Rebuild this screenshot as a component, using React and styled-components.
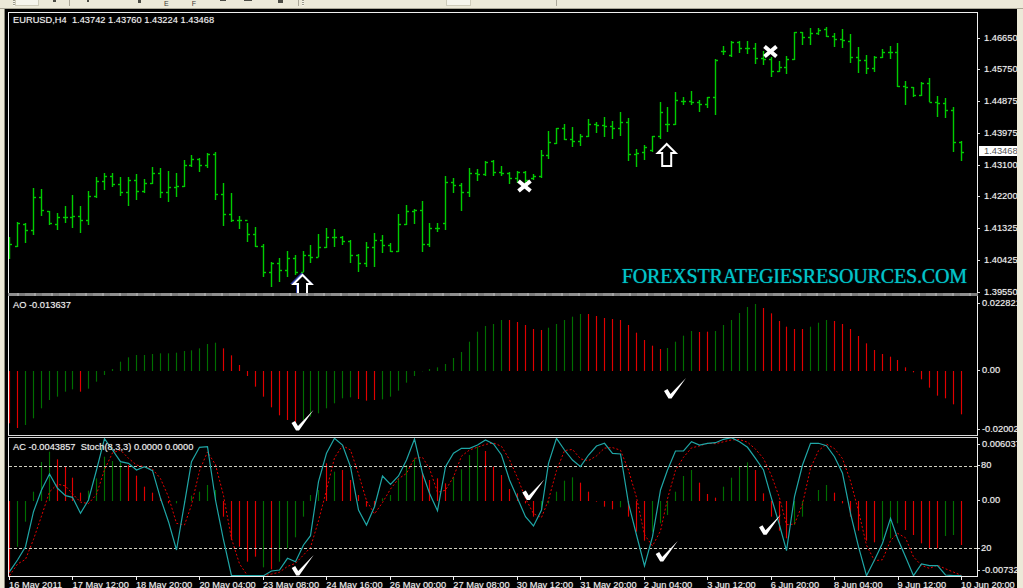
import React from 'react';
import styled, {createGlobalStyle} from 'styled-components';

// Data, read off the chart. y values are page px * 3, bars are [high, low, open, close]
const bars = [
    [712,776,733,733],[667,742,737,670],[670,730,672,690],[565,705,690,592],[568,647,592,631],[632,675,632,670],[640,690,672,650],
    [618,668,650,652],[586,684,652,648],[618,698,648,661],[574,675,661,588],[530,595,588,542],[518,570,542,528],[520,562,528,553],
    [532,588,553,575],[530,618,575,540],[523,600,540,573],[538,580,573,550],[500,553,550,518],[503,594,518,575],[512,606,575,562],
    [518,590,562,558],[480,560,558,495],[465,502,495,478],[475,515,478,495],[460,505,495,462],[456,600,462,583],[548,678,583,643],
    [578,665,643,660],[648,687,660,660],[670,725,660,702],[682,742,702,738],[733,832,738,817],[787,862,817,790],[775,845,790,810],
    [753,832,810,775],[765,825,775,815],[753,815,815,765],[735,788,765,770],[702,770,770,740],[685,745,740,712],[688,740,712,712],
    [708,735,712,723],[720,790,723,765],[762,815,765,789],[727,802,789,740],[700,800,740,720],[705,758,720,735],[730,755,735,752],
    [642,755,752,672],[616,674,672,634],[628,672,634,630],[604,755,630,733],[670,740,733,683],[668,696,683,683],[527,690,670,545],
    [533,580,545,555],[548,633,555,575],[503,590,575,520],[508,544,520,522],[484,528,522,487],[480,528,482,515],[497,528,515,518],
    [515,552,518,533],[514,548,533,516],[514,548,516,540],[522,540,535,527],[450,533,527,466],[393,478,466,425],[385,432,428,385],
    [373,420,385,418],[380,440,418,423],[403,438,423,408],[357,412,408,372],[365,398,372,375],[350,410,375,377],[363,416,377,385],
    [337,407,385,367],[355,482,367,462],[447,500,462,460],[435,480,456,440],[407,455,450,408],[307,418,408,337],[320,395,372,373],
    [277,375,373,300],[290,315,303,303],[272,315,303,305],[300,335,305,312],[290,325,312,292],[178,345,292,180],[137,165,152,152],
    [122,170,165,125],[124,160,125,143],[122,162,143,143],[128,192,143,175],[153,196,175,178],[172,232,178,212],[182,215,212,200],
    [168,222,200,178],[95,180,178,97],[95,134,97,112],[85,134,112,100],[83,104,98,90],[82,112,88,108],[100,140,108,118],[87,143,118,120],
    [102,190,122,170],[140,220,170,180],[165,222,180,205],[167,215,205,172],[148,175,170,155],[137,178,155,155],[128,262,155,258],
    [243,315,258,262],[262,290,262,285],[245,288,285,250],[235,307,250,305],[287,350,305,310],[295,353,310,330],[322,455,330,427],
    [424,482,427,457],
];
const aoValues = [
    400,414,405,385,355,330,320,305,298,305,296,275,255,237,215,202,195,195,192,190,190,188,183,181,175,162,158,175,196,225,258,290,
    320,352,376,390,400,390,380,370,355,340,325,322,327,332,330,328,320,302,278,258,244,237,232,222,204,186,155,125,108,102,90,90,96,
    105,117,120,113,102,90,80,72,72,78,84,87,90,105,128,150,167,177,174,155,137,123,126,125,123,105,90,69,51,42,54,70,93,110,117,117,
    110,98,90,93,102,117,138,160,180,192,200,210,232,247,268,293,317,325,343,373,
];
const aoColors = [['r',2],['g',7],['r',1],['g',17],['r',10],['g',7],['r',3],['g',16],['r',5],['g',5],['r',10],['g',4],['r',2],['g',6],['r',6],['g',3],['r',17]];
const acValues = [
    850,770,695,605,516,485,508,528,563,608,602,565,500,513,518,525,557,590,608,625,640,640,640,617,605,585,600,680,750,770,815,800,
    832,838,815,775,742,680,615,600,520,545,540,570,615,650,650,625,615,565,525,505,550,570,565,580,560,538,495,470,483,530,555,597,
    610,640,680,660,640,605,572,562,578,605,635,650,658,652,680,725,752,725,700,675,605,558,540,578,612,623,590,563,530,517,540,610,
    680,722,745,705,680,632,600,585,608,640,680,722,752,757,750,745,700,720,735,760,775,775,738,735,765,
];
const acColors = [['r',1],['g',5],['r',4],['g',5],['r',6],['g',6],['r',5],['g',1],['r',1],['g',6],['r',1],['g',1],['r',5],['g',5],['r',4],['g',4],['r',7],['g',5],['r',5],['g',1],['r',3],['g',6],['r',3],['g',4],['r',5],['g',5],['r',6],['g',3],['r',5],['g',2],['r',1]];
const stoch = [
    845,810,770,665,600,552,595,617,622,670,630,540,446,480,515,520,540,530,542,625,695,780,640,515,472,470,630,750,857,857,857,857,
    857,843,840,805,815,765,737,575,490,445,465,530,660,705,650,558,583,558,510,447,550,610,662,530,490,475,475,465,450,462,495,570,
    625,680,708,660,520,445,480,510,530,495,468,460,490,492,640,735,828,740,600,540,483,483,455,465,460,458,448,443,455,472,505,540,
    625,705,782,620,525,460,460,467,500,550,670,770,857,810,760,685,745,800,857,822,827,827,855,857,857,
];
const priceLabels = ['1.46650','1.45750','1.44875','1.43975','1.43100','1.42200','1.41325','1.40425','1.39550'];
const dates = ['16 May 2011','17 May 12:00','18 May 20:00','20 May 04:00','23 May 08:00','24 May 16:00','26 May 00:00','27 May 08:00','30 May 12:00','31 May 20:00','2 Jun 04:00','3 Jun 12:00','6 Jun 20:00','8 Jun 04:00','9 Jun 12:00','10 Jun 20:00'];

const barX = (i) => Math.round(9 + i * 7.933) + 0.5;
const lowerY = (z) => 290 + z / 3;
const expand = (runs) => runs.flatMap(([c, n]) => new Array(n).fill(c));
const signal = stoch.map((v, i) => {
    if (i < 2) return v + 12;
    return (stoch[i] + stoch[i - 1] + stoch[i - 2]) / 3;
});
const toPoints = (values) => values.map((z, i) => `${barX(i)},${lowerY(z).toFixed(1)}`).join(' ');

// Styled
const GlobalStyle = createGlobalStyle`
    html, body {
        margin: 0;
        background: #ece9d8;
        overflow: hidden;
    }
`;
const Page = styled.div`
    width: 1023px;
    height: 588px;
    display: flex;
    flex-direction: column;
    overflow: hidden;
    background: #ece9d8;
    font-family: "Liberation Sans", Arial, sans-serif;
    font-size: 9.3px;
    color: #f2f2f2;
    text-shadow: 0 0 1px rgba(255, 255, 255, .45);
`;
const Toolbar = styled.div`
    height: 8px;
    display: flex;
    align-items: flex-start;
    border-bottom: 1px solid #a9a696;
    background: #ece9d8;
    overflow: hidden;
    flex: none;
    text-shadow: none;
`;
const Grip = styled.span`
    width: 2px;
    height: 6px;
    margin-left: ${props => props.$ml}px;
    background: repeating-linear-gradient(#9c9a8a 0 1px, #f7f6ee 1px 2px);
    flex: none;
`;
const Separator = styled.span`
    width: 1px;
    height: 6px;
    margin-left: ${props => props.$ml}px;
    background: #aca899;
    flex: none;
`;
const ActiveButton = styled.span`
    width: ${props => props.$w}px;
    height: 6px;
    margin-left: ${props => props.$ml}px;
    box-sizing: border-box;
    background: #f6f5ec;
    border: 1px solid #cfccba;
    border-top: 0;
    flex: none;
`;
const Glyph = styled.span`
    width: ${props => props.$w}px;
    height: ${props => props.$h}px;
    margin-left: ${props => props.$ml}px;
    background: #4c4c44;
    flex: none;
`;
const ToolLetter = styled.span`
    margin-left: ${props => props.$ml}px;
    font-size: 7px;
    line-height: 7px;
    color: #3c3c34;
    flex: none;
`;
const Workspace = styled.div`
    flex: 1;
    display: flex;
    padding: 0 6px 0 4px;
    min-height: 0;
`;
const Terminal = styled.div`
    width: 1013px;
    box-sizing: border-box;
    background: #000;
    border-left: 1px solid #8c8a7c;
    padding: 3px 0 0 3px;
    display: flex;
    flex-direction: column;
    overflow: hidden;
`;
const Pane = styled.div`
    display: flex;
    height: ${props => props.$h}px;
    flex: none;
`;
const Plot = styled.div`
    position: relative;
    width: 970px;
    box-sizing: border-box;
    border-left: 1px solid #f0f0f0;
    border-right: 1px solid #f0f0f0;
    border-top: ${props => props.$top ? '1px solid #f0f0f0' : '0'};
    overflow: hidden;
    flex: none;
`;
const ChartSvg = styled.svg`
    display: block;
    width: 968px;
    height: 100%;
`;
const Legend = styled.div`
    position: absolute;
    left: 4px;
    top: ${props => props.$top}px;
    line-height: 10px;
    white-space: pre;
`;
const Watermark = styled.div`
    position: absolute;
    right: 10px;
    bottom: 6px;
    font-family: "Liberation Serif", "Times New Roman", serif;
    font-size: 20px;
    line-height: 22px;
    letter-spacing: -0.15px;
    color: #00c4c8;
    text-shadow: 0 0 1px #00a8ae;
    white-space: nowrap;
`;
const Axis = styled.div`
    position: relative;
    width: 39px;
    padding-top: ${props => props.$pad || 0}px;
    box-sizing: border-box;
    display: flex;
    flex-direction: column;
    overflow: ${props => props.$clip ? 'hidden' : 'visible'};
    flex: none;
`;
const AxisLabel = styled.div`
    position: relative;
    height: 10px;
    line-height: 10px;
    margin-top: ${props => props.$mt}px;
    padding-left: ${props => props.$pl}px;
    white-space: nowrap;
    flex: none;
    &::before {
        content: "";
        position: absolute;
        left: 0;
        top: 5px;
        width: 2px;
        height: 1px;
        background: #e0e0e0;
    }
`;
const PriceTag = styled.div`
    position: absolute;
    left: 1px;
    top: 134px;
    width: 38px;
    height: 10px;
    line-height: 10px;
    padding-left: 5px;
    box-sizing: border-box;
    background: #fff;
    color: #555;
    text-shadow: none;
`;
const MainSplitter = styled.div`
    width: 970px;
    height: 3px;
    background: repeating-linear-gradient(90deg, #8e8e8e 0 9px, #a4a4a4 9px 11px, #7c7c7c 11px 17px);
    flex: none;
`;
const SubSplitter = styled.div`
    width: 970px;
    height: 3px;
    box-sizing: border-box;
    border-top: 1px solid #d8d8d8;
    border-bottom: 1px solid #d8d8d8;
    flex: none;
`;
const DateAxis = styled.div`
    width: 970px;
    height: 12px;
    box-sizing: border-box;
    border-top: 1px solid #f0f0f0;
    padding-left: 1px;
    display: flex;
    flex: none;
`;
const DateCell = styled.div`
    position: relative;
    width: 63.47px;
    line-height: 10px;
    padding-top: 3px;
    white-space: nowrap;
    flex: none;
    &::before {
        content: "";
        position: absolute;
        left: 0;
        top: 0;
        width: 1px;
        height: 3px;
        background: #f0f0f0;
    }
`;

// Drawn marks
const Arrow = ({c, t, fringe}) => {
    const d = `M${c},${t} L${c + 9},${t + 9} L${c + 4.5},${t + 9} L${c + 4.5},${t + 22} L${c - 4.5},${t + 22} L${c - 4.5},${t + 9} L${c - 9},${t + 9} Z`;
    return (
        <g>
            {fringe && <path d={d} fill="none" stroke="#2a3aa8" strokeWidth="2" transform="translate(-1,-1)"/>}
            <path d={d} fill="#000" stroke="#fff" strokeWidth="2"/>
        </g>
    );
};
const Cross = ({x, y}) => (
    <g stroke="#fff" strokeWidth="4">
        <line x1={x - 6} y1={y - 5} x2={x + 6} y2={y + 5}/>
        <line x1={x - 6} y1={y + 5} x2={x + 6} y2={y - 5}/>
    </g>
);
const Check = ({x, y}) => (
    <path
        d={`M${x - 6},${y - 7} L${x - 2.5},${y - 9} L${x + 0.5},${y - 4} L${x + 16},${y - 20} L${x + 1.5},${y + 0.5} L${x - 1.5},${y + 0.5} Z`}
        fill="#fff"
    />
);

const PriceBars = () => (
    <g stroke="#00cc00" strokeWidth="1.4">
        {bars.map(([high, low, open, close], i) => {
            const x = barX(i);
            const o = Math.round(open / 3) + 0.5;
            const c = Math.round(close / 3) + 0.5;
            return (
                <g key={i}>
                    <line x1={x} y1={Math.round(high / 3)} x2={x} y2={Math.round(low / 3)}/>
                    <line x1={x - 2.5} y1={o} x2={x} y2={o}/>
                    <line x1={x} y1={c} x2={x + 2.5} y2={c}/>
                </g>
            );
        })}
    </g>
);
const Histogram = ({values, colors, zero}) => {
    const scheme = expand(colors);
    return (
        <g strokeWidth="1.15">
            {values.map((z, i) => (
                <line
                    key={i}
                    x1={barX(i)} x2={barX(i)}
                    y1={lowerY(zero)} y2={lowerY(z)}
                    stroke={scheme[i] === 'r' ? '#e00000' : '#006e00'}
                />
            ))}
        </g>
    );
};

const App = () => (
    <Page>
        <GlobalStyle/>
        <Toolbar>
            <Grip $ml={13}/>
            <ActiveButton $w={24} $ml={0}/>
            <Glyph $w={3} $h={2} $ml={14}/>
            <Separator $ml={13}/>
            <Glyph $w={2} $h={2} $ml={17}/>
            <Glyph $w={3} $h={3} $ml={49}/>
            <ToolLetter $ml={23}>E</ToolLetter>
            <ToolLetter $ml={23}>F</ToolLetter>
            <Glyph $w={6} $h={1} $ml={24}/>
            <Glyph $w={8} $h={1} $ml={18}/>
            <Glyph $w={5} $h={3} $ml={26}/>
            <Separator $ml={15}/>
            <Grip $ml={3}/>
            <ActiveButton $w={25} $ml={142}/>
            <Separator $ml={85}/>
        </Toolbar>
        <Workspace>
            <Terminal>
                <Pane $h={281}>
                    <Plot $top>
                        <ChartSvg viewBox="9 13 968 280" preserveAspectRatio="none">
                            <PriceBars/>
                            <Arrow c={302.5} t={275} fringe/>
                            <Arrow c={666.7} t={144}/>
                            <Cross x={524.5} y={186}/>
                            <Cross x={770.5} y={51.5}/>
                        </ChartSvg>
                        <Legend $top={2}>EURUSD,H4  1.43742 1.43760 1.43224 1.43468</Legend>
                        <Watermark>FOREXSTRATEGIESRESOURCES.COM</Watermark>
                    </Plot>
                    <Axis $pad={20.7}>
                        {priceLabels.map((label, i) => <AxisLabel key={label} $mt={i ? 21.75 : 0} $pl={6}>{label}</AxisLabel>)}
                        <PriceTag>1.43468</PriceTag>
                    </Axis>
                </Pane>
                <MainSplitter/>
                <Pane $h={139}>
                    <Plot>
                        <ChartSvg viewBox="9 296 968 139" preserveAspectRatio="none">
                            <Histogram values={aoValues} colors={aoColors} zero={243}/>
                            <Check x={297.5} y={430}/>
                            <Check x={670} y={398}/>
                        </ChartSvg>
                        <Legend $top={4}>AO -0.013637</Legend>
                    </Plot>
                    <Axis $clip>
                        <AxisLabel $mt={2} $pl={4}>0.022821</AxisLabel>
                        <AxisLabel $mt={57.3} $pl={4}>0.00</AxisLabel>
                        <AxisLabel $mt={48.7} $pl={4}>-0.020026</AxisLabel>
                    </Axis>
                </Pane>
                <SubSplitter/>
                <Pane $h={138}>
                    <Plot>
                        <ChartSvg viewBox="9 438 968 138" preserveAspectRatio="none">
                            <Histogram values={acValues} colors={acColors} zero={633}/>
                            <g stroke="#cfcfc0" strokeWidth="1" strokeDasharray="3 2" shapeRendering="crispEdges">
                                <line x1="9" x2="977" y1="466.5" y2="466.5"/>
                                <line x1="9" x2="977" y1="548.5" y2="548.5"/>
                            </g>
                            <polyline points={toPoints(signal)} fill="none" stroke="#e60000" strokeWidth="1" strokeDasharray="2 2"/>
                            <polyline points={toPoints(stoch)} fill="none" stroke="#1fa6a6" strokeWidth="1.2"/>
                            <Check x={528.3} y={499.5}/>
                            <Check x={661.7} y={561}/>
                            <Check x={765} y={534.3}/>
                            <Check x={297.7} y={575}/>
                        </ChartSvg>
                        <Legend $top={4}>AC -0.0043857  Stoch(8,3,3) 0.0000 0.0000</Legend>
                    </Plot>
                    <Axis $clip>
                        <AxisLabel $mt={1.3} $pl={4}>0.006037</AxisLabel>
                        <AxisLabel $mt={10.7} $pl={3}>80</AxisLabel>
                        <AxisLabel $mt={25} $pl={4}>0.00</AxisLabel>
                        <AxisLabel $mt={37.7} $pl={3}>20</AxisLabel>
                        <AxisLabel $mt={12.3} $pl={4}>-0.007322</AxisLabel>
                    </Axis>
                </Pane>
                <DateAxis>
                    {dates.map((date) => <DateCell key={date}>{date}</DateCell>)}
                </DateAxis>
            </Terminal>
        </Workspace>
    </Page>
);

export default App;
